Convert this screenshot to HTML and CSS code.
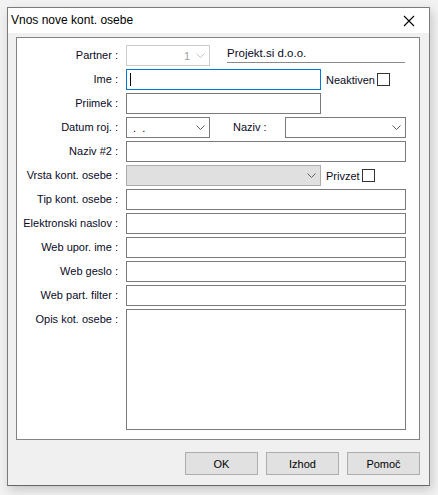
FILE: index.html
```html
<!DOCTYPE html>
<html lang="sl">
<head>
<meta charset="utf-8">
<title>Vnos nove kont. osebe</title>
<link rel="stylesheet" href="styles.css">
</head>
<body>
<div class="window">
  <div class="titlebar">
    <span class="title">Vnos nove kont. osebe</span>
    <svg class="close" width="12" height="12" viewBox="0 0 12 12"><path d="M1 1 L11 11 M11 1 L1 11" stroke="#000" stroke-width="1.1" fill="none"/></svg>
  </div>
  <div class="body">
    <div class="panel">
      <label class="lbl">Partner :</label>
      <div class="line">
        <div class="combo short disabled"><span class="val right">1</span><svg class="chev" width="9" height="5" viewBox="0 0 9 5"><polyline points="0.5,0.5 4.5,4.5 8.5,0.5" fill="none" stroke="#c4c4c4"/></svg></div>
        <span class="partner">Projekt.si d.o.o.</span>
      </div>

      <label class="lbl">Ime :</label>
      <div class="line">
        <div class="input mid focus"><span class="caret"></span></div>
        <span class="chk-lbl">Neaktiven</span><span class="chk"></span>
      </div>

      <label class="lbl">Priimek :</label>
      <div class="line"><div class="input mid"></div></div>

      <label class="lbl">Datum roj. :</label>
      <div class="line">
        <div class="combo short"><span class="val">. &nbsp;.</span><svg class="chev" width="9" height="5" viewBox="0 0 9 5"><polyline points="0.5,0.5 4.5,4.5 8.5,0.5" fill="none" stroke="#606060"/></svg></div>
        <span class="lbl inline">Naziv :</span>
        <div class="combo grow"><span class="val"></span><svg class="chev" width="9" height="5" viewBox="0 0 9 5"><polyline points="0.5,0.5 4.5,4.5 8.5,0.5" fill="none" stroke="#606060"/></svg></div>
      </div>

      <label class="lbl">Naziv #2 :</label>
      <div class="line"><div class="input full"></div></div>

      <label class="lbl">Vrsta kont. osebe :</label>
      <div class="line">
        <div class="combo mid gray"><span class="val"></span><svg class="chev" width="9" height="5" viewBox="0 0 9 5"><polyline points="0.5,0.5 4.5,4.5 8.5,0.5" fill="none" stroke="#606060"/></svg></div>
        <span class="chk-lbl">Privzet</span><span class="chk"></span>
      </div>

      <label class="lbl">Tip kont. osebe :</label>
      <div class="line"><div class="input full"></div></div>

      <label class="lbl">Elektronski naslov :</label>
      <div class="line"><div class="input full"></div></div>

      <label class="lbl">Web upor. ime :</label>
      <div class="line"><div class="input full"></div></div>

      <label class="lbl">Web geslo :</label>
      <div class="line"><div class="input full"></div></div>

      <label class="lbl">Web part. filter :</label>
      <div class="line"><div class="input full"></div></div>

      <label class="lbl top">Opis kot. osebe :</label>
      <div class="line memo-line"><div class="input full memo"></div></div>
    </div>
    <div class="buttons">
      <button class="btn">OK</button>
      <button class="btn">Izhod</button>
      <button class="btn">Pomoč</button>
    </div>
  </div>
</div>
</body>
</html>
```

FILE: styles.css
```css
html, body {
  margin: 0;
  padding: 0;
}

body {
  background: #f2f2f2;
  width: 438px;
  height: 495px;
  padding: 7px 0 0 7px;
  box-sizing: border-box;
  font-family: "Liberation Sans", Arial, sans-serif;
  font-size: 11px;
  color: #000;
}

.window {
  width: 423px;
  height: 479px;
  box-sizing: border-box;
  border: 1px solid #7a7a7a;
  border-bottom-color: #666;
  background: #f0f0f0;
  box-shadow: 2px 4px 10px rgba(0, 0, 0, 0.18);
  display: flex;
  flex-direction: column;
}

.titlebar {
  height: 25px;
  background: #fff;
  display: flex;
  align-items: center;
  justify-content: space-between;
  padding: 0 14px 0 3px;
  flex: none;
}

.title {
  font-size: 12px;
  color: #000;
  margin-top: -1px;
}

.close {
  display: block;
}

.body {
  flex: 1;
  display: flex;
  flex-direction: column;
  padding: 4px 9px 10px 8px;
}

/* label column + field column; the last row holds the memo box */
.panel {
  background: #fff;
  border: 1px solid #828282;
  display: grid;
  grid-template-columns: 101px 1fr;
  grid-template-rows: repeat(11, 21px) 121px;
  column-gap: 8px;
  row-gap: 3px;
  padding: 7px 13px 9px 0;
}

.lbl {
  text-align: right;
  line-height: 21px;
  white-space: nowrap;
  color: #0a0a1e;
}

.lbl.inline {
  width: 52px;
  margin-left: 23px;
  text-align: left;
  flex: none;
}

.line {
  display: flex;
  align-items: center;
  height: 21px;
}

.memo-line {
  height: 121px;
  align-items: flex-start;
}

.input, .combo {
  height: 21px;
  box-sizing: border-box;
  border: 1px solid #7a7a7a;
  background: #fff;
  flex: none;
}

.short { width: 84px; }
.mid { width: 195px; }
.full { width: 280px; }
.grow { width: 121px; }

.focus {
  border-color: #0078d7;
  display: flex;
  align-items: center;
  padding-left: 3px;
}

.caret {
  width: 1px;
  height: 13px;
  background: #000;
}

.combo {
  display: flex;
  align-items: center;
  justify-content: space-between;
  padding: 0 4px 0 5px;
}

.combo .val {
  flex: 1;
  padding-left: 1px;
}

.combo .val.right {
  text-align: right;
  padding-right: 6px;
  color: #a0a0a0;
}

.combo.disabled {
  border-color: #cccccc;
}

.combo.gray {
  background: #e0e0e0;
  border-color: #adadad;
}

.chev {
  display: block;
  flex: none;
}

.partner {
  margin-left: 17px;
  width: 178px;
  height: 18px;
  line-height: 16px;
  border-bottom: 1px solid #8a8a8a;
  box-sizing: border-box;
  color: #0a0a1e;
  font-size: 11.5px;
  margin-top: -3px;
}

.chk-lbl {
  margin-left: 5px;
  color: #0a0a1e;
}

.chk {
  width: 13px;
  height: 13px;
  box-sizing: border-box;
  border: 1px solid #333;
  background: #fff;
  margin-left: 2px;
  margin-top: -1px;
}

.memo {
  height: 121px;
}

.buttons {
  margin-top: auto;
  display: flex;
  justify-content: flex-end;
  gap: 8px;
}

.btn {
  width: 73px;
  height: 23px;
  box-sizing: border-box;
  border: 1px solid #adadad;
  background: #e1e1e1;
  font-family: "Liberation Sans", Arial, sans-serif;
  font-size: 11px;
  color: #000;
  padding: 0;
}
```
